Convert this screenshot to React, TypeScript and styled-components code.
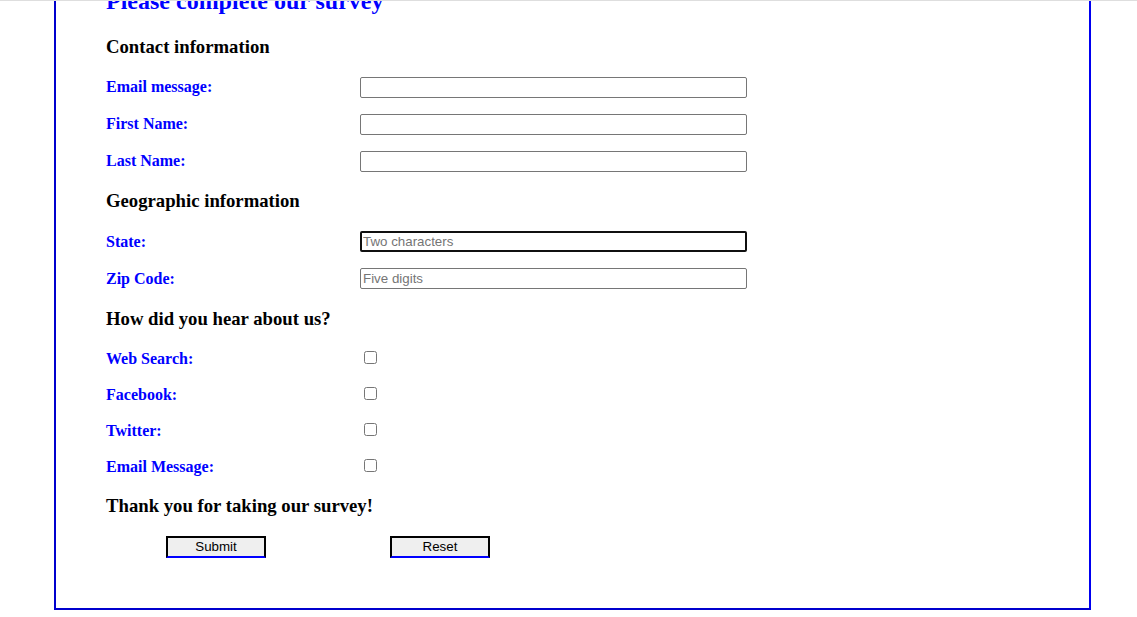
import React from "react";
import styled, { createGlobalStyle } from "styled-components";

const GlobalStyle = createGlobalStyle`
  html, body { margin: 0; padding: 0; background: #ffffff; }
  body { font-family: "Liberation Serif", "Times New Roman", serif; }
`;

const Viewport = styled.div`
  border-top: 1px solid #dedede;
  overflow: hidden;
  padding-bottom: 8px;
`;

const Frame = styled.form`
  margin: -16px 38px 0 54px;
  width: 1037px;
  box-sizing: border-box;
  border: 2px solid #0000cd;
  border-right-color: #0000f0;
  padding: 0 0 42px 50px;
  display: flex;
  flex-direction: column;
`;

const Title = styled.h2`
  margin: 0 0 10px;
  height: 28px;
  font-size: 24px;
  line-height: 28px;
  font-weight: bold;
  color: #0000ff;
`;

const Heading = styled.h3`
  margin: 0;
  height: 43.5px;
  display: flex;
  align-items: center;
  font-size: 18.72px;
  font-weight: bold;
  color: #000000;
`;

const Row = styled.div<{ $h: number }>`
  display: grid;
  grid-template-columns: 254px 387px;
  align-items: center;
  height: ${(p) => p.$h}px;
`;

const Label = styled.label`
  font-size: 16px;
  font-weight: bold;
  color: #0000ff;
`;

const TextInput = styled.input<{ $focused?: boolean }>`
  box-sizing: border-box;
  width: 387px;
  height: 21px;
  margin: 0;
  padding: ${(p) => (p.$focused ? "0 1px" : "1px 2px")};
  border: ${(p) => (p.$focused ? "2px solid #101010" : "1px solid #767676")};
  border-radius: 2px;
  font-family: "Liberation Sans", Arial, sans-serif;
  font-size: 13.333px;
  color: #000;
  background: #fff;
  outline: none;
  &::placeholder { color: #757575; }
`;

const Check = styled.input`
  width: 13px;
  height: 13px;
  margin: 2px 3px 4px 4px;
  justify-self: start;
`;

const ButtonRow = styled.div`
  height: 37.5px;
  display: flex;
  align-items: center;
  gap: 124px;
  padding-left: 60px;
`;

const Button = styled.button`
  box-sizing: border-box;
  width: 100px;
  height: 22px;
  padding: 0 6px;
  background: #efefef;
  border: 2px solid #000;
  border-bottom-color: #0000ff;
  border-radius: 0;
  font-family: "Liberation Sans", Arial, sans-serif;
  font-size: 13.333px;
  color: #000;
`;

const textFields = [
  { id: "email", label: "Email message:" },
  { id: "first", label: "First Name:" },
  { id: "last", label: "Last Name:" },
];

const sources = ["Web Search:", "Facebook:", "Twitter:", "Email Message:"];

export default function App() {
  return (
    <>
      <GlobalStyle />
      <Viewport>
        <Frame onSubmit={(e) => e.preventDefault()}>
          <Title>Please complete our survey</Title>
          <Heading>Contact information</Heading>
          {textFields.map((f) => (
            <Row $h={37} key={f.id}>
              <Label htmlFor={f.id}>{f.label}</Label>
              <TextInput id={f.id} type="text" />
            </Row>
          ))}
          <Heading>Geographic information</Heading>
          <Row $h={37}>
            <Label htmlFor="state">State:</Label>
            <TextInput id="state" type="text" placeholder="Two characters" $focused />
          </Row>
          <Row $h={37}>
            <Label htmlFor="zip">Zip Code:</Label>
            <TextInput id="zip" type="text" placeholder="Five digits" />
          </Row>
          <Heading>How did you hear about us?</Heading>
          {sources.map((s, i) => (
            <Row $h={36} key={s}>
              <Label htmlFor={`src${i}`}>{s}</Label>
              <Check id={`src${i}`} type="checkbox" />
            </Row>
          ))}
          <Heading>Thank you for taking our survey!</Heading>
          <ButtonRow>
            <Button type="submit">Submit</Button>
            <Button type="reset">Reset</Button>
          </ButtonRow>
        </Frame>
      </Viewport>
    </>
  );
}
